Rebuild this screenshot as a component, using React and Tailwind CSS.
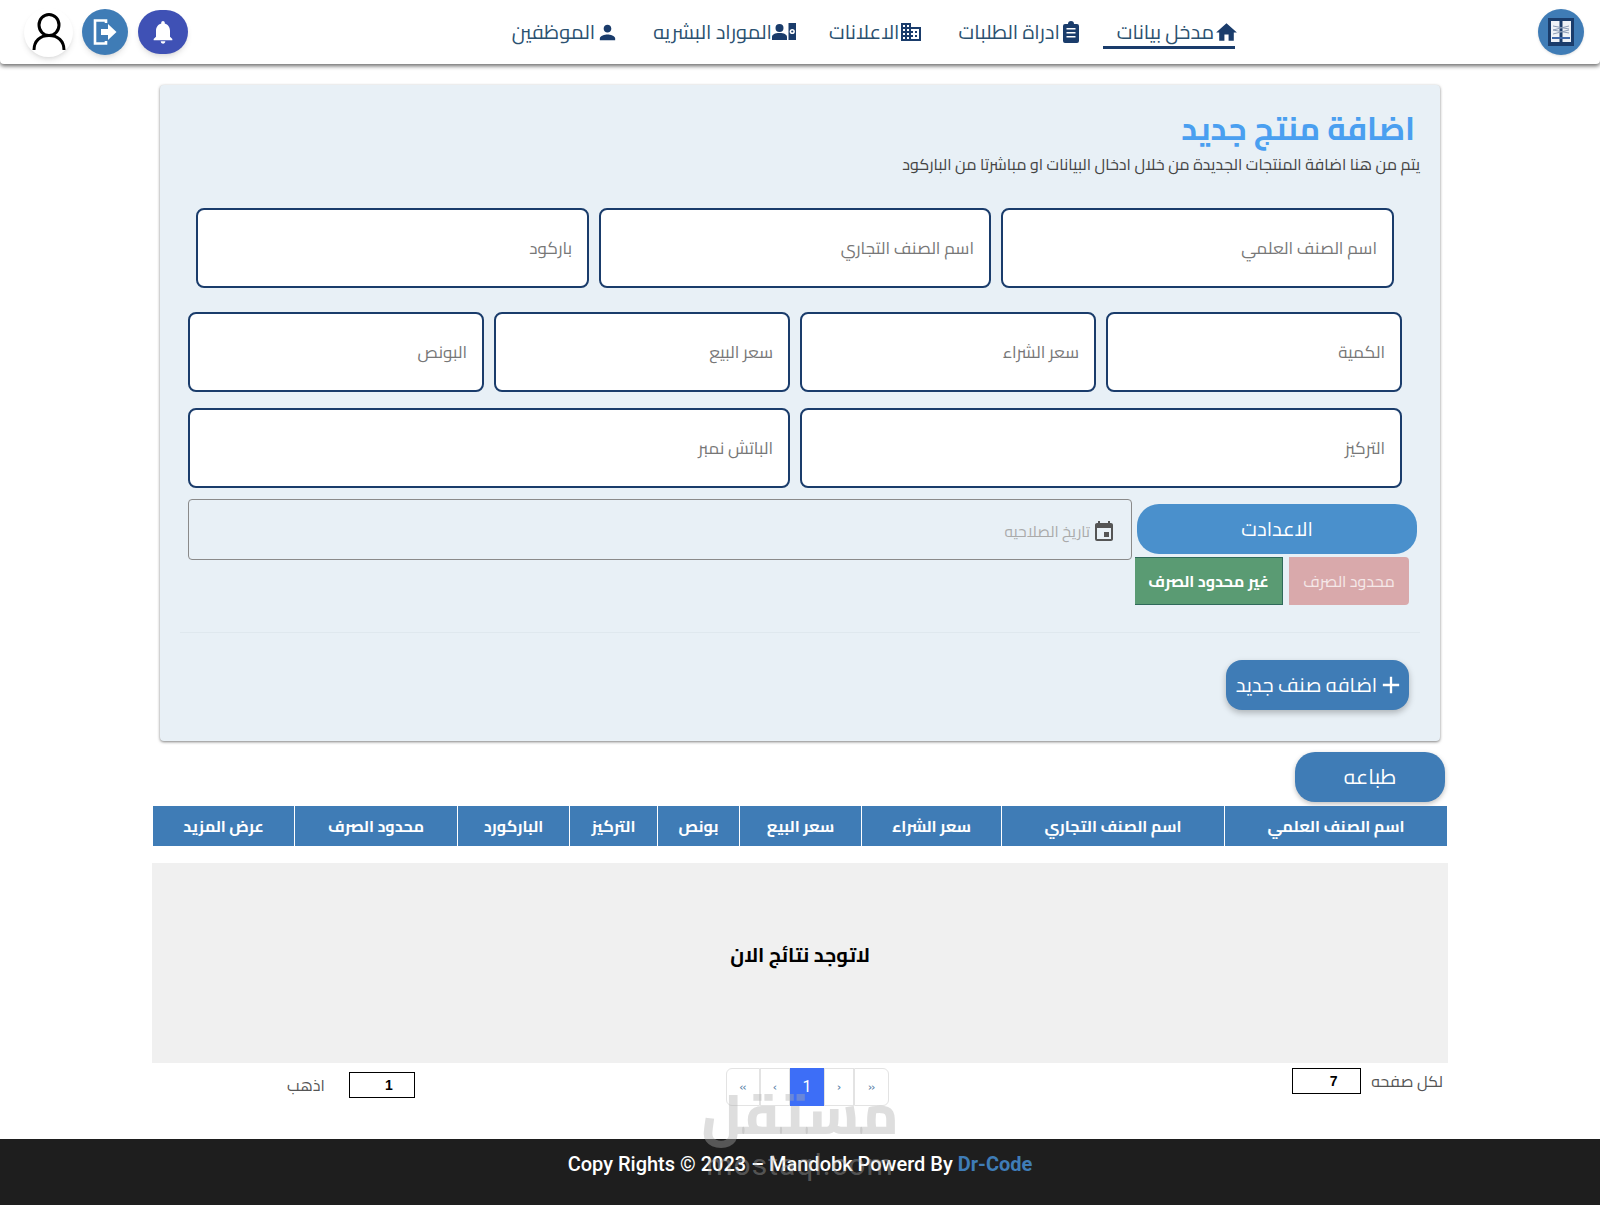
import React from "react";
import { MdHome, MdDomain, MdPerson, MdNotifications, MdEvent, MdAdd } from "react-icons/md";

const ar = "font-['Cairo','Noto_Sans_Arabic','DejaVu_Sans',sans-serif]";

const Field = ({ label, className = "" }) => (
  <div className={`h-20 bg-white border-2 border-[#1a3c6b] rounded-lg flex items-center pr-[15px] pl-4 pt-0.5 text-[17px] text-[#777] ${className}`}>{label}</div>
);

const NavItem = ({ icon, label, active, className = "" }) => (
  <div className={`relative flex items-center text-[20px] text-[#2b5170] ${className}`}>
    {icon}
    <span>{label}</span>
    {active && <div className="absolute top-[29px] left-[-14px] right-[4px] h-[3px] bg-[#1a3c6b]" />}
  </div>
);

const ClipboardIcon = () => (
  <svg width="22" height="22" viewBox="0 0 22 22" className="text-[#1a3c6b]">
    <path fill="currentColor" d="M5 3h3a3 3 0 0 1 6 0h3a2 2 0 0 1 2 2v15a2 2 0 0 1-2 2H5a2 2 0 0 1-2-2V5a2 2 0 0 1 2-2z" />
    <path fill="#fff" d="M6.500 7h9v1.600h-9zM6.500 11h9v1.600h-9zM6.500 15h9v1.600h-9z" />
  </svg>
);

const HrIcon = () => (
  <svg width="24" height="20" viewBox="0 0 24 20" className="text-[#1a3c6b]">
    <path fill="currentColor" d="M16.500 1H24v17h-7.500zM7.500 2a4 4 0 1 1 0 8 4 4 0 0 1 0-8zM0 18v-3c0-2.500 3-4 7.500-4s7.500 1.500 7.500 4v3z" />
    <circle cx="20.250" cy="9.500" r="2.600" fill="#fff" />
    <circle cx="20.250" cy="9.500" r="1.100" fill="currentColor" />
  </svg>
);

const LogoutIcon = () => (
  <svg width="24" height="28" viewBox="0 0 24 28" fill="none" stroke="#fff" strokeWidth="2.600">
    <path d="M13 5V2.500H2v23h11V23" />
    <path fill="#fff" stroke="none" d="M8 11h7V6l8.500 8-8.500 8v-5H8z" />
  </svg>
);

const UserIcon = () => (
  <svg width="34" height="38" viewBox="0 0 34 38" fill="none" stroke="#000" strokeWidth="3">
    <ellipse cx="17" cy="12" rx="10" ry="10.500" />
    <path d="M2 37c0-9 6-14.500 15-14.500S32 28 32 37" />
  </svg>
);

const LogoIcon = () => (
  <svg width="26" height="28" viewBox="0 0 26 28">
    <rect width="26" height="28" fill="#1a3c6b" />
    <rect x="3" y="3" width="8.500" height="21" fill="#eef2f7" />
    <rect x="14.500" y="3" width="8.500" height="21" fill="#eef2f7" />
    <path d="M5 8l16 3M5 12l16 3M21 8L5 12M21 12L5 16" stroke="#8a9bb5" strokeWidth="1" />
    <rect x="4" y="19" width="18" height="2" fill="#3f68a8" />
  </svg>
);

const cols = [
  ["اسم الصنف العلمي", "w-[223px]"], ["اسم الصنف التجاري", "w-[223px]"], ["سعر الشراء", "w-[140px]"], ["سعر البيع", "w-[122px]"], ["بونص", "w-[82px]"], ["التركيز", "w-[88px]"], ["الباركورد", "w-[112px]"], ["محدود الصرف", "w-[163px]"], ["عرض المزيد", "w-[141px]"],
];

const PageBtn = ({ children, className = "" }) => (
  <div className={`h-[38px] flex items-center justify-center border border-[#e3e3e3] text-[13px] text-[#5b7fa6] ${className}`}>{children}</div>
);

export default function App() {
  return (
    <div dir="rtl" className={`relative w-[1600px] h-[1205px] bg-white overflow-hidden flex flex-col ${ar}`}>
      <header className="h-16 shrink-0 bg-white rounded-b shadow-[0_2px_4px_rgba(0,0,0,0.6)] flex items-center justify-between pr-4 pl-6 relative">
        <div className="w-[46px] h-[46px] rounded-full bg-[#3f7cb6] flex items-center justify-center shadow">
          <LogoIcon />
        </div>
        <nav className="flex items-center absolute right-[361px]">
          <NavItem active icon={<MdHome className="text-[25px] text-[#1a3c6b]" />} label="مدخل بيانات" />
          <NavItem className="mr-[35px]" icon={<ClipboardIcon />} label="ادراة الطلبات" />
          <NavItem className="mr-[35px]" icon={<MdDomain className="text-[24px] text-[#1a3c6b]" />} label="الاعلانات" />
          <NavItem className="mr-[33px]" icon={<HrIcon />} label="الموراد البشريه" />
          <NavItem className="mr-[34px]" icon={<MdPerson className="text-[23px] text-[#1a3c6b] ml-px" />} label="الموظفين" />
        </nav>
        <div className="flex items-center gap-[9px]">
          <div className="w-[50px] h-[44px] ml-px rounded-full bg-[#3f51b5] flex items-center justify-center shadow-md text-white"><MdNotifications className="text-[28px]" /></div>
          <div className="w-[46px] h-[46px] rounded-full bg-[#3f7cb6] flex items-center justify-center shadow-md"><LogoutIcon /></div>
          <div className="w-[49px] h-[49px] rounded-full bg-white shadow-md flex items-center justify-center"><UserIcon /></div>
        </div>
      </header>

      <main className="flex-1 flex flex-col items-center pt-[21px]">
        <section className="w-[1280px] h-[656px] bg-[#e8f0f6] rounded shadow-[0_1px_3px_rgba(0,0,0,0.5)] flex flex-col pr-[19px]">
          <h1 className="text-[32px] font-bold text-[#4a9ff0] pr-[6px] mt-[20px] leading-[46px]">اضافة منتج جديد</h1>
          <p className="text-base text-[#444] leading-5 mt-[3px] mr-px">يتم من هنا اضافة المنتجات الجديدة من خلال ادخال البيانات او مباشرتا من الباركود</p>
          <div className="flex gap-2.5 mt-[34px] pr-[27px]">
            <Field className="w-[393px]" label="اسم الصنف العلمي" />
            <Field className="w-[392px]" label="اسم الصنف التجاري" />
            <Field className="w-[393px]" label="باركود" />
          </div>
          <div className="flex gap-2.5 mt-6 pr-[19px]">
            {["الكمية", "سعر الشراء", "سعر البيع", "البونص"].map((l) => <Field key={l} className="w-[296px]" label={l} />)}
          </div>
          <div className="flex gap-2.5 mt-4 pr-[19px]">
            <Field className="w-[602px]" label="التركيز" />
            <Field className="w-[602px]" label="الباتش نمبر" />
          </div>
          <div className="flex gap-[3px] mt-[11px] pr-[2px] items-start">
            <div className="w-[284px] flex flex-col pt-[5px]">
              <button className="mx-[2px] h-[50px] rounded-[22px] bg-[#4a90cc] text-white text-[20px]">الاعدادت</button>
              <div className="flex gap-[6px] mt-[3px] pr-[10px]">
                <div className="w-[120px] h-[48px] bg-[#d9a9ab] rounded-r text-[#f5e8e8] text-[16px] flex items-center justify-center">محدود الصرف</div>
                <div className="w-[148px] h-[48px] bg-[#5a9b73] border border-[#2f6a5a] border-l-0 text-white font-bold text-[16px] flex items-center justify-center">غير محدود الصرف</div>
              </div>
            </div>
            <div className="w-[944px] h-[61px] border border-[#8a8a8a] rounded flex items-center gap-0.5 pr-[15px] pl-4 text-[15.5px] text-[#aaa]">
              <MdEvent className="text-[24px] text-[#555] mt-1" />
              <span className="pt-1">تاريخ الصلاحيه</span>
            </div>
          </div>
          <div className="h-px bg-[#dfe8ee] mt-[27px] mr-px w-[1240px]" />
          <div className="pr-[12px] mt-[27px]">
            <button className="w-[183px] h-[50px] rounded-2xl bg-[#3f7cb6] text-white text-[20px] shadow-[0_3px_6px_rgba(0,0,0,0.25)] flex items-center justify-center pl-[6px]">
              <MdAdd className="text-[28px]" />
              <span>اضافه صنف جديد</span>
            </button>
          </div>
        </section>

        <div className="w-[1296px] flex flex-col mt-[11px]">
          <button className="self-start mr-[3px] w-[150px] h-[50px] rounded-[20px] bg-[#3f7cb6] text-white text-[21px] shadow-[0_2px_5px_rgba(0,0,0,0.25)]">طباعه</button>
          <div className="flex mt-1 mr-px w-[1294px] h-10 bg-[#3f7cb6]">
            {cols.map(([l, w], i) => (
              <div key={l} className={`${w} flex items-center justify-center text-white font-bold text-base ${i < cols.length - 1 ? "border-l border-white" : ""}`}>{l}</div>
            ))}
          </div>
          <div className="mt-[17px] h-[200px] bg-[#f0f0f0] flex items-center justify-center pb-4 text-[20px] font-bold text-black">لاتوجد نتائج الان</div>
          <div className="grid grid-cols-3 mt-[5px]">
            <div className="flex items-start gap-[10px] pr-[5px]">
              <span className="text-[16px] text-[#555] leading-[26px]">لكل صفحه</span>
              <div className="w-[69px] h-[26px] border border-black flex items-center justify-center text-[14px] font-bold text-black font-['Liberation_Sans',sans-serif]" dir="ltr"><span className="pl-3.5">7</span></div>
            </div>
            <div className="flex justify-center pl-[15px]" dir="rtl">
              <div className="flex" dir="ltr">
                <PageBtn className="w-[34px] rounded-l-md">«</PageBtn>
                <PageBtn className="w-[30px]">‹</PageBtn>
                <div className="w-[34px] h-[38px] bg-[#3d6ef7] text-white flex items-center justify-center text-[16px] font-['Roboto',sans-serif]">1</div>
                <PageBtn className="w-[30px]">›</PageBtn>
                <PageBtn className="w-[35px] rounded-r-md">»</PageBtn>
              </div>
            </div>
            <div className="flex items-start justify-end gap-[24px] pl-[135px] pt-1">
              <div className="w-[66px] h-[26px] border border-black flex items-center justify-center text-[14px] font-bold text-black font-['Liberation_Sans',sans-serif]" dir="ltr"><span className="pl-3.5">1</span></div>
              <span className="text-[16px] text-[#555] leading-[26px]">اذهب</span>
            </div>
          </div>
        </div>
      </main>

      <footer className="h-[66px] shrink-0 bg-[#1e1e1e] text-white text-center text-xl font-medium pt-[11px] font-['Roboto',sans-serif] relative z-10" dir="ltr">
        Copy Rights © 2023 – Mandobk Powerd By <span className="text-[#3f7cb6] font-bold">Dr-Code</span>
      </footer>

      <div className="absolute z-20 left-[704px] top-[1086px] w-[192px] flex flex-col items-center pointer-events-none text-[#adadad]/40">
        <span className="text-[56px] font-extrabold leading-[56px]">مستقل</span>
        <span dir="ltr" className="text-[30px] tracking-[1px] leading-[30px] mt-[8px] font-['Roboto',sans-serif]">mostaql.com</span>
      </div>
    </div>
  );
}
